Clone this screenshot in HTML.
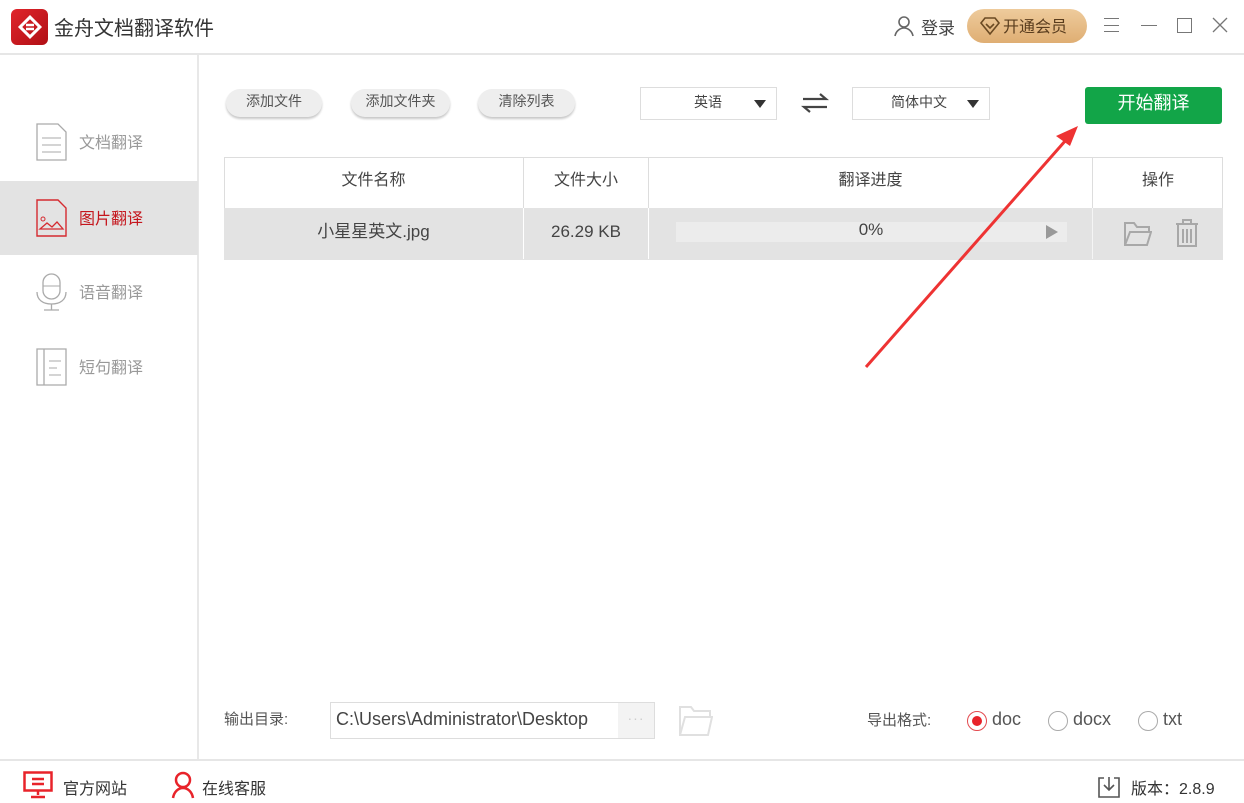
<!DOCTYPE html>
<html><head><meta charset="utf-8"><style>
*{margin:0;padding:0;box-sizing:border-box}
body{width:1244px;height:803px;background:#fff;font-family:"Liberation Sans","Noto Sans CJK SC",sans-serif;position:relative;overflow:hidden;color:#333}
.a{position:absolute}
.btn{position:absolute;top:89px;height:28px;border-radius:14px;background:#eeeeee;box-shadow:0 2px 2px #c8c8c8;font-size:14px;color:#555;text-align:center;line-height:24px}
.dd{position:absolute;top:87px;height:33px;border:1px solid #ddd;font-size:14px;color:#444;line-height:29px}
.dd i{position:absolute;right:10px;top:12px;border-left:6px solid transparent;border-right:6px solid transparent;border-top:8px solid #333}
.nav{position:absolute;left:0;width:198px;height:74px;font-size:16px;color:#999}
.nav span{position:absolute;left:79px;top:24px}
.th{position:absolute;top:157px;height:51px;line-height:47px;text-align:center;font-size:16px;color:#444;border-right:1px solid #ddd}
.td{position:absolute;top:208px;height:51px;line-height:47px;text-align:center;font-size:17px;color:#444;border-right:1px solid #fff}
.rad{position:absolute;top:711px;width:20px;height:20px;border-radius:50%;border:1px solid #aaa;background:#fff}
</style></head><body>
<div class="a" style="left:11px;top:9px;width:37px;height:36px;border-radius:6px;background:linear-gradient(135deg,#e0252b,#b00f15)"></div>
<svg class="a" style="left:17px;top:14px" width="26" height="26" viewBox="0 0 26 26"><rect x="6" y="6" width="14" height="14" transform="rotate(45 13 13)" fill="none" stroke="#fff" stroke-width="3"/><path d="M9 11h8M9 15h8" stroke="#fff" stroke-width="2.5"/></svg>
<div class="a" style="left:54px;top:12px;font-size:20px;color:#333">金舟文档翻译软件</div>
<svg class="a" style="left:893px;top:15px" width="22" height="22" viewBox="0 0 22 22"><circle cx="11" cy="7" r="5" fill="none" stroke="#666" stroke-width="1.6"/><path d="M2 21c1-5 5-8 9-8s8 3 9 8" fill="none" stroke="#666" stroke-width="1.6"/></svg>
<div class="a" style="left:921px;top:14px;font-size:17px;color:#444">登录</div>
<div class="a" style="left:967px;top:9px;width:120px;height:34px;border-radius:17px;background:linear-gradient(#eecb9c,#dfae73);"></div>
<svg class="a" style="left:979px;top:15px" width="22" height="22" viewBox="0 0 22 22"><path d="M2 8l4-5h10l4 5-9 11z" fill="none" stroke="#6b4a23" stroke-width="1.6"/><path d="M7 9l4 4 4-4" fill="none" stroke="#6b4a23" stroke-width="1.6"/></svg>
<div class="a" style="left:1003px;top:13px;font-size:16px;color:#5a3d1e">开通会员</div>
<div class="a" style="left:1104px;top:18px;width:15px;height:14px;border-top:1px solid #777;border-bottom:1px solid #777"></div>
<div class="a" style="left:1104px;top:25px;width:15px;height:1px;background:#777"></div>
<div class="a" style="left:1141px;top:25px;width:16px;height:1px;background:#777"></div>
<div class="a" style="left:1177px;top:18px;width:15px;height:15px;border:1.3px solid #777"></div>
<svg class="a" style="left:1212px;top:17px" width="16" height="16"><path d="M1 1l14 14M15 1L1 15" stroke="#777" stroke-width="1.3"/></svg>
<div class="a" style="left:0;top:53px;width:1244px;height:2px;background:#e6e6e6"></div>
<div class="a" style="left:197px;top:55px;width:2px;height:704px;background:#e8e8e8"></div>
<div class="nav" style="top:105px"><svg class="a" style="left:36px;top:18px" width="31" height="38" viewBox="0 0 31 38"><path d="M1 1h21l8 8v28H1z" fill="none" stroke="#aaa" stroke-width="1.3"/><path d="M6 15h19M6 22h19M6 29h19" stroke="#aaa"/></svg><span>文档翻译</span></div>
<div class="nav" style="top:181px;background:#e3e3e3;color:#c5161d"><svg class="a" style="left:36px;top:18px" width="31" height="38" viewBox="0 0 31 38"><path d="M1 1h21l8 8v28H1z" fill="none" stroke="#d52a30" stroke-width="1.4"/><circle cx="7" cy="20" r="2" fill="none" stroke="#d52a30"/><path d="M4 30l7-6 5 4 5-5 6 7z" fill="none" stroke="#d52a30" stroke-width="1.3"/></svg><span>图片翻译</span></div>
<div class="nav" style="top:255px"><svg class="a" style="left:36px;top:18px" width="31" height="40" viewBox="0 0 31 40"><rect x="7" y="1" width="17" height="25" rx="8.5" fill="none" stroke="#aaa" stroke-width="1.3"/><path d="M7 13h17" stroke="#aaa"/><path d="M1 19c0 8 6 12 14.5 12S30 27 30 19M15.5 31v6M8 37h15" fill="none" stroke="#aaa" stroke-width="1.3"/></svg><span>语音翻译</span></div>
<div class="nav" style="top:330px"><svg class="a" style="left:36px;top:18px" width="31" height="38" viewBox="0 0 31 38"><path d="M1 1h29v36H1zM8 1v36" fill="none" stroke="#aaa" stroke-width="1.3"/><path d="M13 13h12M13 20h8M13 27h12" stroke="#aaa"/></svg><span>短句翻译</span></div>
<div class="btn" style="left:226px;width:96px">添加文件</div>
<div class="btn" style="left:351px;width:99px">添加文件夹</div>
<div class="btn" style="left:478px;width:97px">清除列表</div>
<div class="dd" style="left:640px;width:137px"><span style="position:absolute;left:53px">英语</span><i></i></div>
<svg class="a" style="left:801px;top:92px" width="28" height="22" viewBox="0 0 28 22"><path d="M2 7h23l-6-5M26 15H3l6 5" fill="none" stroke="#444" stroke-width="2.2"/></svg>
<div class="dd" style="left:852px;width:138px"><span style="position:absolute;left:38px">简体中文</span><i></i></div>
<div class="a" style="left:1085px;top:87px;width:137px;height:37px;border-radius:3px;background:#12a548;color:#fff;font-size:18px;text-align:center;line-height:33px">开始翻译</div>
<div class="a" style="left:224px;top:157px;width:999px;height:103px;border:1px solid #ddd"></div>
<div class="th" style="left:224px;width:300px">文件名称</div>
<div class="th" style="left:524px;width:125px">文件大小</div>
<div class="th" style="left:649px;width:444px">翻译进度</div>
<div class="th" style="left:1093px;width:130px;border-right:none">操作</div>
<div class="a" style="left:224px;top:208px;width:999px;height:52px;background:#e3e3e3"></div>
<div class="td" style="left:224px;width:300px">小星星英文.jpg</div>
<div class="td" style="left:524px;width:125px">26.29 KB</div>
<div class="a" style="left:676px;top:222px;width:391px;height:20px;background:#ececec"></div>
<div class="a" style="left:649px;top:220px;width:444px;text-align:center;font-size:17px;color:#444">0%</div>
<div class="a" style="left:1046px;top:225px;border-top:7px solid transparent;border-bottom:7px solid transparent;border-left:12px solid #999"></div>
<div class="a" style="left:1092px;top:208px;width:1px;height:51px;background:#f5f5f5"></div>
<svg class="a" style="left:1124px;top:221px" width="28" height="26" viewBox="0 0 28 26"><path d="M1 24V2h9l3 4h12v5M1 24l5-13h21l-4 13z" fill="none" stroke="#a8a8a8" stroke-width="2"/></svg>
<svg class="a" style="left:1175px;top:219px" width="24" height="28" viewBox="0 0 24 28"><path d="M1 5h22M8 5V1h8v4M3 5v22h18V5M8 10v14M12 10v14M16 10v14" fill="none" stroke="#a8a8a8" stroke-width="2"/></svg>
<svg class="a" style="left:0;top:0" width="1244" height="803"><line x1="866" y1="367" x2="1066" y2="140" stroke="#ee3333" stroke-width="3"/><path d="M1078 126l-22 10 14 10z" fill="#ee3333"/></svg>
<div class="a" style="left:224px;top:708px;font-size:15px;color:#555">输出目录:</div>
<div class="a" style="left:330px;top:702px;width:325px;height:37px;border:1px solid #ddd"></div>
<div class="a" style="left:336px;top:709px;font-size:18px;color:#444">C:\Users\Administrator\Desktop</div>
<div class="a" style="left:618px;top:703px;width:36px;height:35px;background:#f3f3f3;color:#ccc;text-align:center;font-size:14px;line-height:30px;letter-spacing:1px">···</div>
<svg class="a" style="left:679px;top:705px" width="34" height="32" viewBox="0 0 34 32"><path d="M1 30V2h11l3 4h16v6M1 30l5-18h27l-4 18z" fill="none" stroke="#e0e0e0" stroke-width="2"/></svg>
<div class="a" style="left:867px;top:709px;font-size:15px;color:#555">导出格式:</div>
<div class="rad" style="left:967px;border-color:#e34a4f"><div class="a" style="left:4px;top:4px;width:10px;height:10px;border-radius:50%;background:#e8232a"></div></div>
<div class="a" style="left:992px;top:709px;font-size:18px;color:#555">doc</div>
<div class="rad" style="left:1048px"></div>
<div class="a" style="left:1073px;top:709px;font-size:18px;color:#555">docx</div>
<div class="rad" style="left:1138px"></div>
<div class="a" style="left:1163px;top:709px;font-size:18px;color:#555">txt</div>
<div class="a" style="left:0;top:759px;width:1244px;height:2px;background:#e6e6e6"></div>
<svg class="a" style="left:23px;top:771px" width="30" height="28" viewBox="0 0 30 28"><rect x="1.5" y="1.5" width="27" height="18" fill="none" stroke="#e8232a" stroke-width="2.5"/><path d="M9 8h12M9 13h12M15 20v4M8 26h14" stroke="#e8232a" stroke-width="2.5"/></svg>
<div class="a" style="left:63px;top:775px;font-size:16px;color:#333">官方网站</div>
<svg class="a" style="left:171px;top:771px" width="24" height="28" viewBox="0 0 24 28"><circle cx="12" cy="9" r="7" fill="none" stroke="#e8232a" stroke-width="2.5"/><path d="M2 27c1-6 5-10 10-10s9 4 10 10" fill="none" stroke="#e8232a" stroke-width="2.5"/></svg>
<div class="a" style="left:202px;top:775px;font-size:16px;color:#333">在线客服</div>
<svg class="a" style="left:1098px;top:776px" width="22" height="22" viewBox="0 0 22 22"><path d="M6 2H1v19h20V2h-5M11 1v13M6 9l5 5 5-5" fill="none" stroke="#555" stroke-width="1.6"/></svg>
<div class="a" style="left:1131px;top:775px;font-size:16px;color:#333">版本：2.8.9</div>
</body></html>
